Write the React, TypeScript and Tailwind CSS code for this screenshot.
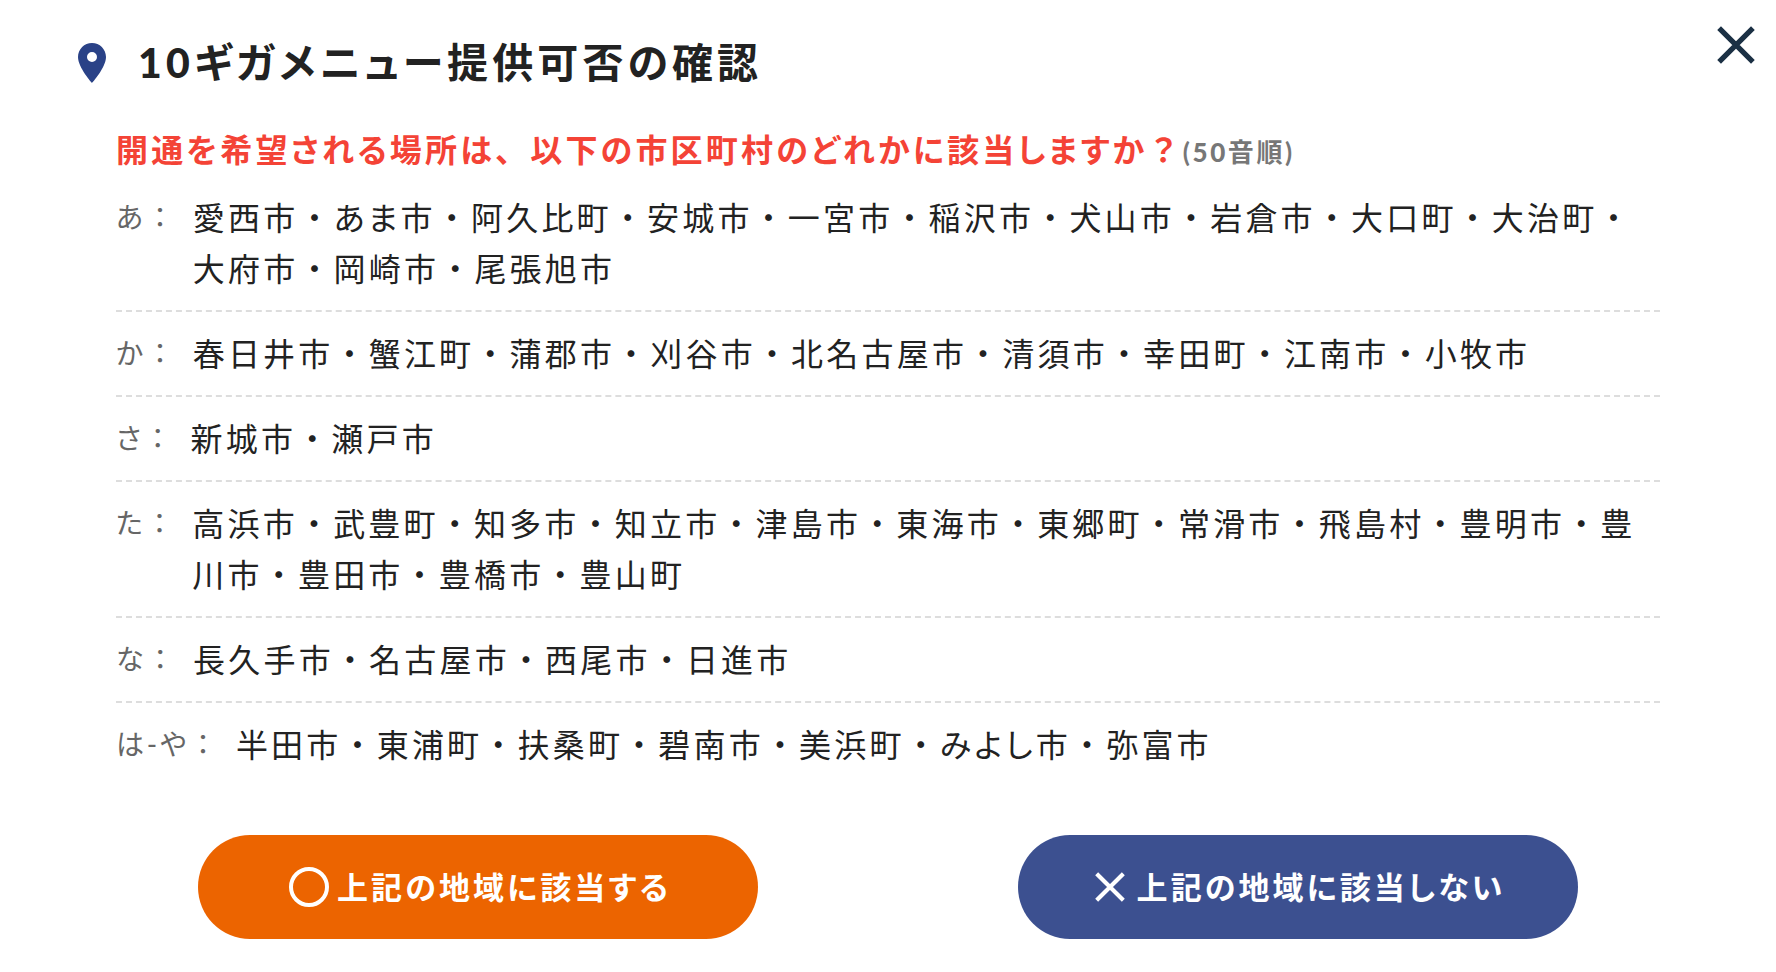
const rows = [
  { label: "あ", cities: "愛西市・あま市・阿久比町・安城市・一宮市・稲沢市・犬山市・岩倉市・大口町・大治町・大府市・岡崎市・尾張旭市" },
  { label: "か", cities: "春日井市・蟹江町・蒲郡市・刈谷市・北名古屋市・清須市・幸田町・江南市・小牧市" },
  { label: "さ", cities: "新城市・瀬戸市" },
  { label: "た", cities: "高浜市・武豊町・知多市・知立市・津島市・東海市・東郷町・常滑市・飛島村・豊明市・豊川市・豊田市・豊橋市・豊山町" },
  { label: "な", cities: "長久手市・名古屋市・西尾市・日進市" },
  { label: "は-や", cities: "半田市・東浦町・扶桑町・碧南市・美浜町・みよし市・弥富市" },
];

// Kana are set proportionally, kanji and punctuation keep their full width.
const Kana = ({ children }: { children: string }) =>
  children.split(/([ぁ-んァ-ヶー]+)/).map((part, i) =>
    i % 2 ? (
      <span key={i} className="[font-feature-settings:'palt']">
        {part}
      </span>
    ) : (
      part
    ),
  );

const PinIcon = () => (
  <svg viewBox="0 0 28 40" className="h-10 w-7 shrink-0" aria-hidden="true">
    <path
      fill="#2a4287"
      fillRule="evenodd"
      d="M14 0C6.3 0 0 6.2 0 14c0 10.500 14 26 14 26s14-15.500 14-26C28 6.200 21.700 0 14 0zm0 19a5 5 0 1 1 0-10 5 5 0 0 1 0 10z"
    />
  </svg>
);

const CrossIcon = ({ className }: { className: string }) => (
  <svg viewBox="0 0 36 36" className={className} aria-hidden="true">
    <path d="M2 2l32 32M34 2L2 34" fill="none" stroke="currentColor" strokeWidth="5" />
  </svg>
);

export default function App() {
  return (
    <main className="bg-white pt-[26px] pb-8 font-['Lato','Noto_Sans_CJK_JP',sans-serif] text-[#222]">
      <header className="flex items-start justify-between pr-[21px] pl-[78px]">
        <div className="flex items-center gap-8">
          <PinIcon />
          <h1 className="text-[41px] leading-[74px] font-bold tracking-widest">
            <span className="font-black">10</span>
            <Kana>ギガメニュー提供可否の確認</Kana>
          </h1>
        </div>
        <button type="button" aria-label="閉じる" className="cursor-pointer text-[#1b3044]">
          <CrossIcon className="size-[38px]" />
        </button>
      </header>

      <section className="px-[116px] pt-[26px]">
        <h2 className="text-[32px] leading-[48px] font-bold tracking-widest text-[#f44336]">
          <Kana>開通を希望される場所は、以下の市区町村のどれかに該当しますか？</Kana>
          <span className="text-[26px] tracking-widest text-[#777]">
            (<span className="font-black">50</span>音順)
          </span>
        </h2>
        <dl>
          {rows.map((row) => (
            <div
              key={row.label}
              className="flex gap-4 border-b-2 border-dashed border-[#ddd] py-4 pr-4 leading-[51px] last:border-b-0"
            >
              <dt className="shrink-0 text-[28px] tracking-widest text-[#666]">
                <Kana>{row.label + "："}</Kana>
              </dt>
              <dd className="text-[32px] tracking-widest">
                <Kana>{row.cities}</Kana>
              </dd>
            </div>
          ))}
        </dl>
      </section>

      <div className="grid grid-cols-2 justify-items-center px-[68px] pt-[49px]">
        <button
          type="button"
          className="flex h-[104px] w-[560px] cursor-pointer items-center justify-center gap-2 rounded-full bg-[#ec6400] pl-1 text-[31px] font-bold tracking-widest text-white"
        >
          <svg viewBox="0 0 40 40" className="size-10" aria-hidden="true">
            <circle cx="20" cy="20" r="18" fill="none" stroke="currentColor" strokeWidth="4" />
          </svg>
          <span>
            <Kana>上記の地域に該当する</Kana>
          </span>
        </button>
        <button
          type="button"
          className="flex h-[104px] w-[560px] cursor-pointer items-center justify-center gap-3 rounded-full bg-[#3c5090] pl-1 text-[31px] font-bold tracking-widest text-white"
        >
          <CrossIcon className="size-[30px]" />
          <span>
            <Kana>上記の地域に該当しない</Kana>
          </span>
        </button>
      </div>
    </main>
  );
}
